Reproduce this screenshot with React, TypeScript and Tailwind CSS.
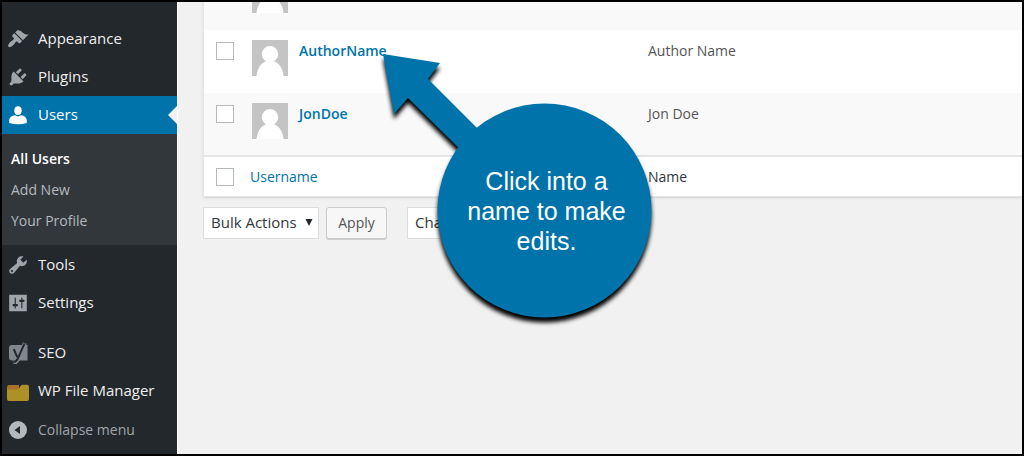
import type { ReactNode } from 'react';

type Item = { label: string; icon: ReactNode; current?: boolean };

function Dashicon({ d }: { d: string }) {
  return (
    <svg viewBox="0 0 20 20" className="size-[22px]" fill="currentColor" aria-hidden="true">
      <path d={d} />
    </svg>
  );
}

const appearance =
  'M14.48 11.06L7.41 3.99l1.5-1.5c.5-.56 2.3-.47 3.51.32 1.21.8 1.43 1.28 2.91 2.1 1.18.64 2.45 1.26 4.45.85zm-.71.71L6.7 4.7 4.93 6.47c-.39.39-.39 1.02 0 1.41l1.06 1.06c.39.39.39 1.03 0 1.42-.6.6-1.43 1.11-2.21 1.69-.35.26-.7.53-1.01.84C1.43 14.23.4 16.08 1.4 17.07c.99 1 2.84-.03 4.18-1.36.31-.31.58-.66.85-1.02.57-.78 1.08-1.61 1.69-2.21.39-.39 1.02-.39 1.41 0l1.06 1.06c.39.39 1.02.39 1.41 0z';
const plugins =
  'M13.11 4.36L9.87 7.6 8 5.73l3.24-3.24c.35-.34 1.05-.2 1.56.32.52.51.66 1.21.31 1.55zm-8 1.77l.91-1.12 9.01 9.01-1.19.84c-.71.71-2.63 1.16-3.82 1.16H6.14L4.9 17.26c-.59.59-1.54.59-2.12 0-.59-.58-.59-1.53 0-2.12l1.24-1.24v-3.88c0-1.13.4-3.19 1.09-3.89zm7.26 3.97l3.24-3.24c.34-.35 1.04-.21 1.55.31.52.51.66 1.21.31 1.55l-3.24 3.25z';
const users =
  'M10 10C7.700 10 6.600 7.700 6.600 5.600 6.600 3.300 8 2 10 2s3.400 1.300 3.400 3.600C13.400 7.700 12.300 10 10 10zM7.300 10.300Q10 12.400 12.700 10.300C15.800 10.600 18 12.500 18 15v2.200Q14 18.500 10 18.500T2 17.200V15c0-2.500 2.200-4.400 5.300-4.700z';
const tools =
  'M16.68 9.77c-1.34 1.34-3.3 1.67-4.95.99l-5.41 6.52c-.99.99-2.59.99-3.58 0s-.99-2.59 0-3.57l6.52-5.42c-.68-1.65-.35-3.61.99-4.95 1.28-1.28 3.12-1.62 4.72-1.06l-2.89 2.89 2.82 2.82 2.86-2.87c.53 1.58.18 3.39-1.08 4.65zM3.81 16.21c.4.39 1.04.39 1.43 0 .4-.4.4-1.04 0-1.43-.39-.4-1.03-.4-1.43 0-.39.39-.39 1.03 0 1.43z';
const settings =
  'M18 17.500V2.500H2v15zM8 11h1c.55 0 1 .45 1 1s-.45 1-1 1H8v1.5c0 .28-.22.5-.5.5s-.5-.22-.5-.5V13H6c-.55 0-1-.45-1-1s.45-1 1-1h1V5.5c0-.28.22-.5.5-.5s.5.22.5.5V11zm5-2h-1c-.55 0-1-.45-1-1s.45-1 1-1h1V5.5c0-.28.22-.5.5-.5s.5.22.5.5V7h1c.55 0 1 .45 1 1s-.45 1-1 1h-1v5.5c0 .28-.22.5-.5.5s-.5-.22-.5-.5V9z';

function SeoIcon() {
  return (
    <svg viewBox="0 0 22 22" className="size-[22px]" aria-hidden="true">
      <path d="M5 3H20.500V18.500H5a3 3 0 0 1-3-3V6a3 3 0 0 1 3-3z" fill="#82878c" />
      <path d="M17.800 1L11 17.200c-1 2.500-2.200 3.500-4.600 3.600" fill="none" stroke="#82878c" strokeWidth="4" />
      <path d="M6.800 7.200l3.400 7.800M17.600 1.300L10.800 16.600c-1 2.400-2 3.200-4.300 3.400" fill="none" stroke="#23282d" strokeWidth="2" />
    </svg>
  );
}

function FolderIcon() {
  return (
    <svg viewBox="0 0 24 22" className="h-[22px] w-6 shrink-0" aria-hidden="true">
      <path d="M1 7a2 2 0 0 1 2-2h10v8H1z" fill="#a9702a" />
      <path d="M1 9.500h9.500c1.200 0 1.800-.5 2.500-1.300l1.400-2c.7-.9 1.300-1.500 2.500-1.500h4.100a2 2 0 0 1 2 2V19a2 2 0 0 1-2 2H3a2 2 0 0 1-2-2z" fill="#ad9026" />
    </svg>
  );
}

function CollapseIcon() {
  return (
    <svg viewBox="0 0 22 22" className="size-[22px]" aria-hidden="true">
      <circle cx="11" cy="11" r="9" fill="#b4b9be" />
      <path d="M13 7v8l-5.500-4z" fill="#23282d" />
    </svg>
  );
}

const topItems: Item[] = [
  { label: 'Appearance', icon: <Dashicon d={appearance} /> },
  { label: 'Plugins', icon: <Dashicon d={plugins} /> },
  { label: 'Users', icon: <Dashicon d={users} />, current: true },
];
const middleItems: Item[] = [
  { label: 'Tools', icon: <Dashicon d={tools} /> },
  { label: 'Settings', icon: <Dashicon d={settings} /> },
];
const bottomItems: Item[] = [
  { label: 'SEO', icon: <SeoIcon /> },
  { label: 'WP File Manager', icon: <FolderIcon /> },
];

function MenuItem({ label, icon, current }: Item) {
  return (
    <li>
      <a
        href="#"
        className={
          current
            ? 'relative flex h-[38px] items-center bg-[#0073aa] text-[15px] text-white'
            : 'flex h-[38px] items-center text-[15px] text-[#eeeeee]'
        }
      >
        <span className={current ? 'flex w-9 justify-center pr-1' : 'flex w-9 justify-center pr-1 text-[#a0a5aa]'}>{icon}</span>
        {label}
        {current && (
          <span className="absolute top-1/2 right-0 -translate-y-1/2 border-y-9 border-r-9 border-y-transparent border-r-[#f1f1f1]" />
        )}
      </a>
    </li>
  );
}

function Avatar() {
  return (
    <svg viewBox="0 0 36 36" className="size-9 shrink-0" aria-hidden="true">
      <path d="M0 0h36v36H0z" fill="#c4c4c4" />
      <circle cx="18" cy="14.200" r="8.200" fill="#fff" />
      <path d="M4.500 36C5.500 27 10 20.800 18 20.800S30.500 27 31.500 36z" fill="#fff" />
    </svg>
  );
}

function Tick({ label }: { label: string }) {
  return (
    <input
      type="checkbox"
      aria-label={label}
      className="block size-[18px] appearance-none border border-[#b4b9be] bg-white"
    />
  );
}

function UserRow({ login, name, shaded }: { login: string; name: string; shaded?: boolean }) {
  return (
    <tr className={shaded ? 'h-[63px] bg-[#f9f9f9] align-top' : 'h-[63px] bg-white align-top'}>
      <td className="pt-3 pl-3">
        <Tick label={'Select ' + login} />
      </td>
      <td className="pt-2.5 pl-2.5">
        <div className="flex gap-[11px]">
          <Avatar />
          <a href="#" className="leading-[21px] font-semibold text-[#0073aa]">{login}</a>
        </div>
      </td>
      <td className="pt-2.5 pl-2 leading-[21px] text-[#555555]">{name}</td>
    </tr>
  );
}

function DropDown({ label, option, width }: { label: string; option: string; width: string }) {
  return (
    <div className={'relative ' + width}>
      <select
        aria-label={label}
        className="h-8 w-full appearance-none border border-[#dddddd] bg-white pl-[7px] text-[15px] text-[#32373c]"
      >
        <option>{option}</option>
      </select>
      <svg viewBox="0 0 8 8" className="pointer-events-none absolute top-3 right-1.5 size-2" aria-hidden="true">
        <path d="M.500 0h7L4 7z" fill="#23282d" />
      </svg>
    </div>
  );
}

export default function App() {
  return (
    <div className="relative flex min-h-screen overflow-hidden border-2 border-black bg-[#f1f1f1] font-['Open_Sans','Noto_Sans',sans-serif] text-sm">
      <nav className="w-[176px] shrink-0 border-r border-white bg-[#23282d] pt-[18px]">
        <ul>
          {topItems.map((item) => (
            <MenuItem key={item.label} {...item} />
          ))}
        </ul>
        <ul className="bg-[#32373c] py-[9px] pl-[9px] text-[#b4b9be]">
          <li className="h-[31px] leading-[31px] font-semibold text-white"><a href="#">All Users</a></li>
          <li className="h-[31px] leading-[31px]"><a href="#">Add New</a></li>
          <li className="h-[31px] leading-[31px]"><a href="#">Your Profile</a></li>
        </ul>
        <ul className="pt-px">
          {middleItems.map((item) => (
            <MenuItem key={item.label} {...item} />
          ))}
        </ul>
        <ul className="pt-3">
          {bottomItems.map((item) => (
            <MenuItem key={item.label} {...item} />
          ))}
        </ul>
        <button type="button" className="flex h-10 w-full items-center text-[#a0a5aa]">
          <span className="flex w-9 justify-center pr-1"><CollapseIcon /></span>
          Collapse menu
        </button>
      </nav>

      <main className="min-w-0 flex-1 pl-[25px]">
        <div className="-mt-[35px] border-b border-l border-[#e5e5e5] shadow-sm">
          <table className="w-full table-fixed border-collapse">
            <colgroup>
              <col className="w-[38px]" />
              <col className="w-[398px]" />
              <col />
            </colgroup>
            <tbody>
              <UserRow login="" name="" shaded />
              <UserRow login="AuthorName" name="Author Name" />
              <UserRow login="JonDoe" name="Jon Doe" shaded />
            </tbody>
            <tfoot>
              <tr className="h-10 border-t-2 border-[#e5e5e5] bg-white text-left">
                <td className="pl-3"><Tick label="Select all" /></td>
                <th className="pl-2 font-normal"><a href="#" className="text-[#0073aa]">Username</a></th>
                <th className="pl-2 font-normal text-[#32373c]">Name</th>
              </tr>
            </tfoot>
          </table>
        </div>
        <div className="flex pt-2.5">
          <DropDown label="Bulk actions" option="Bulk Actions" width="w-[116px]" />
          <button
            type="button"
            className="mr-5 ml-[7px] h-8 w-[61px] rounded-[3px] border border-[#cccccc] bg-[#f7f7f7] text-[#555555] shadow-[0_1px_0_#cccccc]"
          >
            Apply
          </button>
          <DropDown label="Change role" option="Change role to…" width="w-[150px]" />
        </div>
      </main>

      <div className="absolute top-[101px] left-[435px] flex size-[215px] items-center justify-center">
        <svg viewBox="0 0 280 280" className="absolute -top-[53px] -left-[57px] size-[280px] overflow-visible" aria-hidden="true">
          <g fill="#0073aa" className="drop-shadow-[0_5px_2px_rgba(0,0,0,1)]">
            <path d="M3 4L60 13 48 29 110 91 92 111 28 48 14 64z" />
            <circle cx="164.500" cy="160.500" r="107" />
          </g>
        </svg>
        <p className="relative w-[170px] pl-1 text-center font-['Liberation_Sans',Arial,sans-serif] text-[25px] leading-[30px] text-white">
          Click into a name to make edits.
        </p>
      </div>
    </div>
  );
}
